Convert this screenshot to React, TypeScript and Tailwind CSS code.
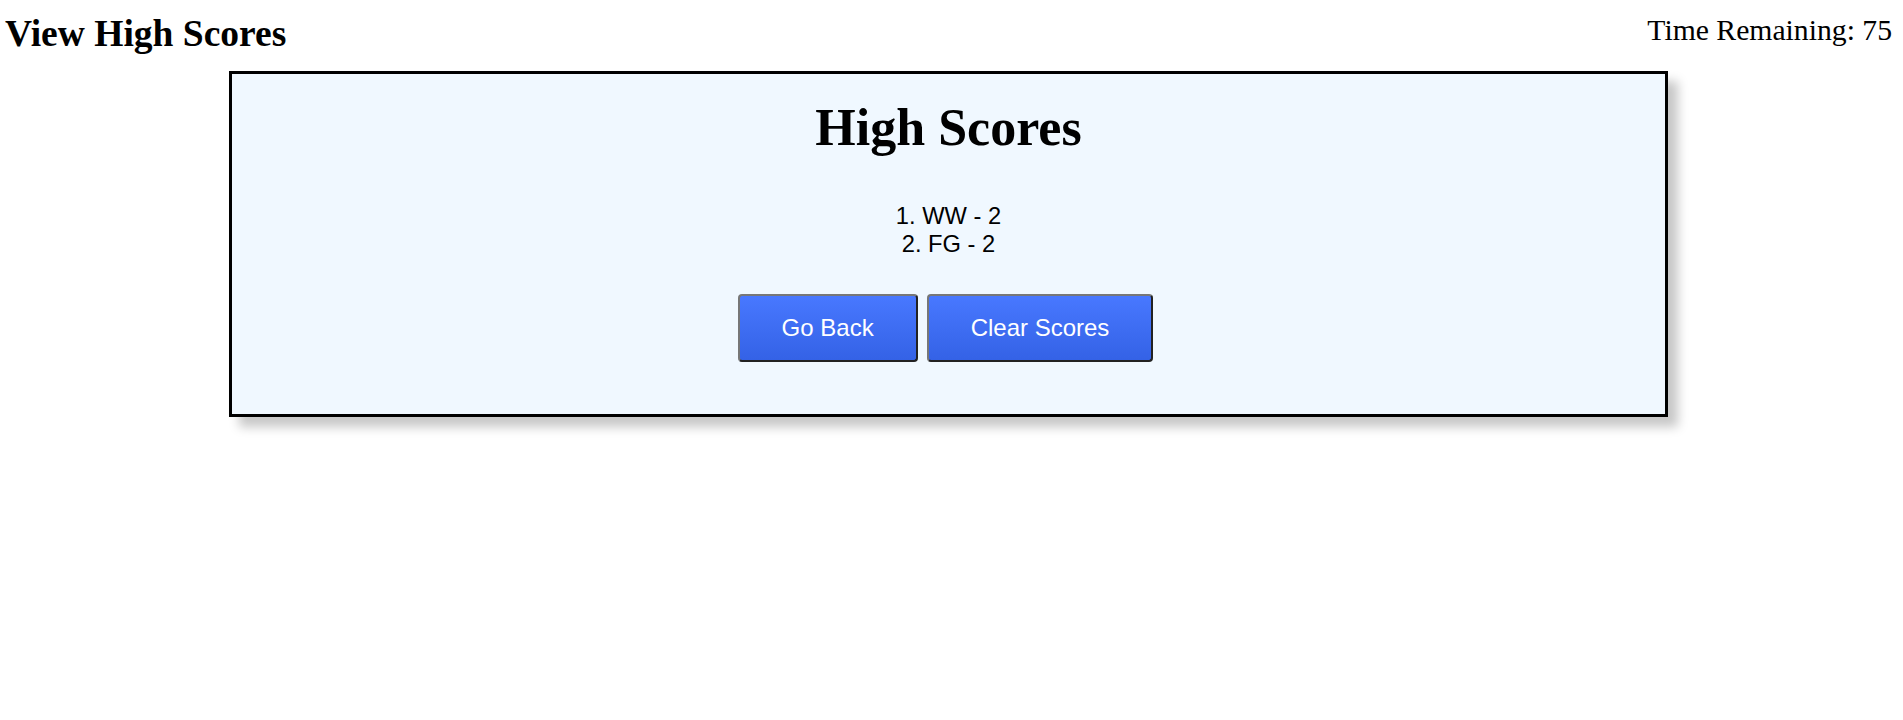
import React from "react";

const scores = [
  { initials: "WW", score: 2 },
  { initials: "FG", score: 2 },
];

function QuizButton({ label }: { label: string }) {
  return (
    <button className="px-[42px] py-[18px] text-[24px] leading-[28px] text-white font-['Liberation_Sans',Arial,sans-serif] bg-gradient-to-b from-[#4878ff] to-[#3462e6] border-2 border-t-[#777] border-l-[#777] border-r-[#222] border-b-[#222] rounded-[4px]">
      {label}
    </button>
  );
}

export default function App() {
  return (
    <div className="min-h-[720px] bg-white text-black font-['Liberation_Serif','Times_New_Roman',serif]">
      {/* Header */}
      <header className="flex items-start justify-between pt-[13px] pl-[5px] pr-[11px]">
        <h1 className="text-[37.5px] leading-[42px] font-bold">View High Scores</h1>
        <div className="text-[29.7px] leading-[34px]">Time Remaining: 75</div>
      </header>

      {/* Scores card */}
      <main className="mt-[16px] ml-[229px] w-[1439px] border-[3px] border-black bg-[#f0f8ff] shadow-[10px_10px_10px_rgba(0,0,0,0.22)] pt-[25px] pb-[52px] flex flex-col items-center">
        <h2 className="text-[52px] leading-[58px] font-bold">High Scores</h2>

        <ol className="mt-[45px] text-center text-[23.7px] leading-[28px] font-['Liberation_Sans',Arial,sans-serif]">
          {scores.map((s, i) => (
            <li key={s.initials}>
              {i + 1}. {s.initials} - {s.score}
            </li>
          ))}
        </ol>

        <div className="mt-[36px] flex gap-[9px] pr-[6px]">
          <QuizButton label="Go Back" />
          <QuizButton label="Clear Scores" />
        </div>
      </main>
    </div>
  );
}
